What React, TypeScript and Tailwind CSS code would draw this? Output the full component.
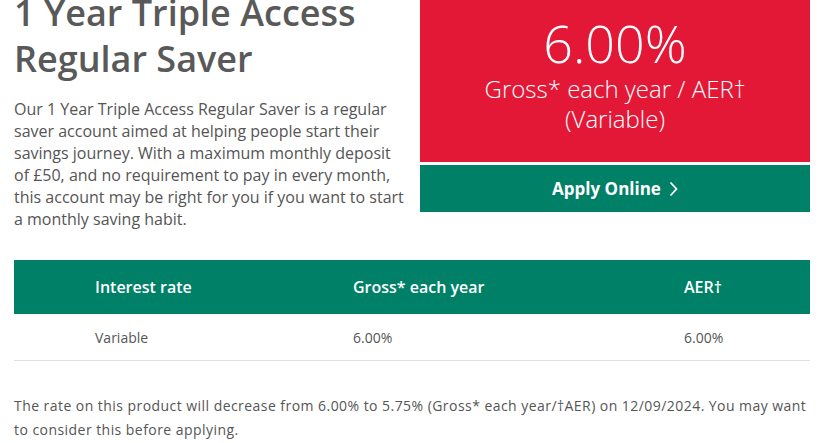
import React from 'react';

const rows = [{ type: 'Variable', gross: '6.00%', aer: '6.00%' }];

export default function App() {
  return (
    <div className="w-[823px] h-[443px] overflow-hidden bg-white font-['Open_Sans',sans-serif] text-[#555]">
      <div className="flex items-start gap-[15px] pl-[14px] pr-[13px] -mt-[30px]">
        <div className="w-[391px] shrink-0">
          <h1 className="text-[36px] leading-[46px] font-semibold text-[#595959] pt-[20px]">
            1 Year Triple Access Regular Saver
          </h1>
          <p className="mt-[16px] text-[16px] leading-[22px]">
            Our 1 Year Triple Access Regular Saver is a regular saver account aimed at helping people start their
            savings journey. With a maximum monthly deposit of £50, and no requirement to pay in every month, this
            account may be right for you if you want to start a monthly saving habit.
          </p>
        </div>
        <div className="flex-1 flex flex-col">
          <div className="h-[192px] bg-[#e31837] text-white flex flex-col items-center justify-end pb-[28px] font-light">
            <div className="text-[52px] leading-[58px]">6.00%</div>
            <div className="text-[24px] leading-[30px] mt-[2px]">Gross* each year / AER†</div>
            <div className="text-[24px] leading-[30px]">(Variable)</div>
          </div>
          <button className="mt-[3px] h-[47px] bg-[#008066] text-white text-[17px] font-bold flex items-center justify-center gap-[8px]">
            Apply Online
            <svg width="9" height="16" viewBox="0 0 9 16" fill="none" stroke="white" strokeWidth="1.8">
              <path d="M1.5 1.5 L7.5 8 L1.5 14.5" />
            </svg>
          </button>
        </div>
      </div>

      <div className="mx-[14px] mt-[30px] w-[796px]">
        <div className="flex items-center h-[54px] bg-[#008066] text-white font-semibold text-[16px] pl-[81px]">
          <div className="w-[258px]">Interest rate</div>
          <div className="w-[331px]">Gross* each year</div>
          <div>AER†</div>
        </div>
        {rows.map((r) => (
          <div key={r.type} className="flex items-center h-[47px] border-b border-[#e0e0e0] text-[14px] pl-[81px]">
            <div className="w-[258px]">{r.type}</div>
            <div className="w-[331px]">{r.gross}</div>
            <div>{r.aer}</div>
          </div>
        ))}
      </div>

      <p className="mx-[14px] mt-[33px] w-[798px] text-[14px] leading-[24px] tracking-[0.45px]">
        The rate on this product will decrease from 6.00% to 5.75% (Gross* each year/†AER) on 12/09/2024. You may want
        to consider this before applying.
      </p>
    </div>
  );
}
